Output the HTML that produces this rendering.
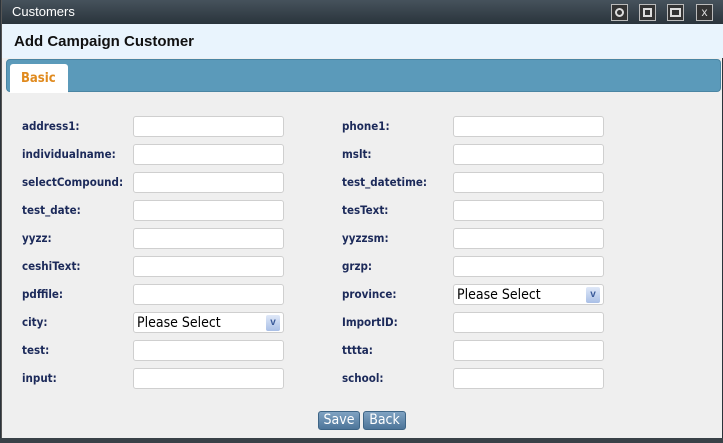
<!DOCTYPE html>
<html><head><style>
*{margin:0;padding:0;box-sizing:border-box}
body{width:723px;height:443px;overflow:hidden;background:#2b333a;font-family:"Liberation Sans",sans-serif;position:relative}
.win{position:absolute;left:1px;top:0;width:721px;height:438px;background:#efefef;border-left:1px solid #555}
.title{position:absolute;left:0;top:0;width:721px;height:24px;background:linear-gradient(#46525c,#2a343c);color:#fff;font:13px "Liberation Sans",sans-serif;padding:4px 0 0 10px}
.ic{position:absolute;top:4px;width:17px;height:17px;border:1px solid #bbb;background:#333}
.ic i{position:absolute;left:3px;top:3px;width:9px;height:9px;border:2px solid #ddd}
.hdr{position:absolute;left:0;top:24px;width:721px;height:34px;background:#e9f4fd;font:bold 15px "Liberation Sans",sans-serif;padding:9px 0 0 12px;color:#111}
.tabbar{position:absolute;left:4px;top:59px;width:715px;height:33px;background:#5b9aba;border-radius:4px;border:1px solid #4a85a3}
.tab{position:absolute;left:3px;top:4px;width:58px;height:29px;background:#fff;border-radius:3px 3px 0 0;color:#e08a1e;font:bold 13px "DejaVu Sans Condensed","DejaVu Sans",sans-serif;padding:7px 0 0 11px}
.l{position:absolute;font:bold 11.5px "DejaVu Sans Condensed","Liberation Sans",sans-serif;color:#1c2a5a}
.in{position:absolute;width:151px;height:21px;background:#fff;border:1px solid #cfcfcf;border-radius:3px}
.sel{font:14px "DejaVu Sans Condensed","DejaVu Sans",sans-serif;padding:2px 0 0 3px;color:#000}
.sel b{position:absolute;right:3px;top:2px;width:14px;height:16px;background:linear-gradient(#dfe8f8,#a9bfe6);border-radius:2px;color:#3a5a99;font:bold 10px "Liberation Sans",sans-serif;text-align:center;line-height:15px}
.btn{position:absolute;top:411px;height:19px;background:linear-gradient(#7fa2c2,#4d7599);border:1px solid #3e6586;border-radius:3px;color:#fff;font:14px "DejaVu Sans Condensed",sans-serif;text-align:center;line-height:17px}
.bot{position:absolute;left:0;top:438px;width:723px;height:5px;background:#394147}
</style></head><body>
<div class="win">
<div class="title">Customers
<div class="ic" style="left:609px"><i style="border-radius:50%"></i></div>
<div class="ic" style="left:637px"><i></i></div>
<div class="ic" style="left:665px"><i style="width:11px;height:9px;left:2px"></i></div>
<div class="ic" style="left:694px;color:#ddd;font-size:12px;text-align:center;line-height:15px">x</div>
</div>
<div class="hdr">Add Campaign Customer</div>
<div class="tabbar"><div class="tab">Basic</div></div>
</div>
<div id="f"></div>
<div class="btn" style="left:318px;width:42px">Save</div>
<div class="btn" style="left:363px;width:43px">Back</div>
<div class="bot"></div>
<script>
var L=["address1:","individualname:","selectCompound:","test_date:","yyzz:","ceshiText:","pdffile:","city:","test:","input:"];
var R=["phone1:","mslt:","test_datetime:","tesText:","yyzzsm:","grzp:","province:","ImportID:","tttta:","school:"];
var h="";
for(var i=0;i<10;i++){var y=116+i*28;
h+='<div class="l" style="left:22px;top:'+(y+3)+'px">'+L[i]+'</div>';
h+='<div class="l" style="left:342px;top:'+(y+3)+'px">'+R[i]+'</div>';
h+='<div class="in'+(i==7?' sel':'')+'" style="left:133px;top:'+y+'px">'+(i==7?'Please Select<b>v</b>':'')+'</div>';
h+='<div class="in'+(i==6?' sel':'')+'" style="left:453px;top:'+y+'px">'+(i==6?'Please Select<b>v</b>':'')+'</div>';}
document.getElementById("f").innerHTML=h;
</script>
</body></html>
